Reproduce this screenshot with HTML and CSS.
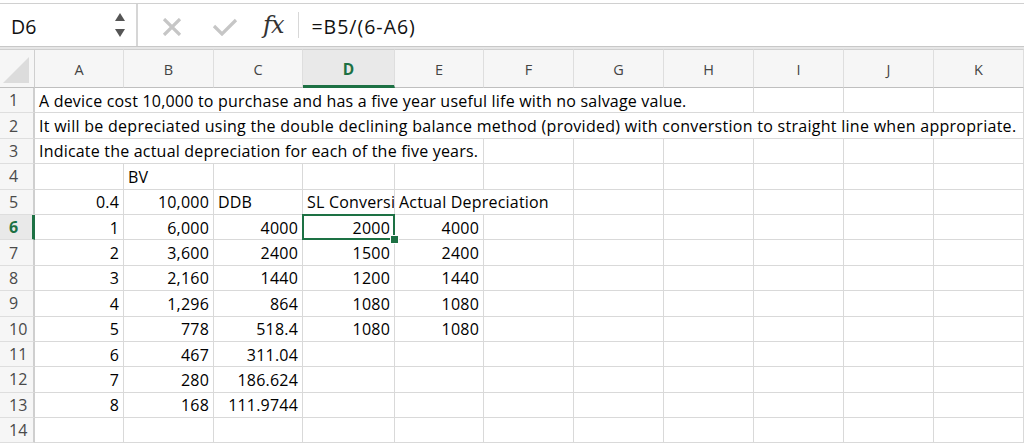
FILE: index.html
```html
<!DOCTYPE html>
<html>
<head>
<meta charset="utf-8">
<link rel="stylesheet" href="styles.css">
</head>
<body>
<div class="app">
  <div class="fbar">
    <div class="namebox">
      <span class="ref">D6</span>
      <span class="spin">
        <svg width="12" height="28" viewBox="0 0 12 28"><path d="M6 2 L11 10 L1 10 Z" fill="#555"/><path d="M1 18 L11 18 L6 26 Z" fill="#555"/></svg>
      </span>
    </div>
    <div class="fbtns">
      <svg class="ic" width="20" height="18" viewBox="0 0 20 18"><path d="M2 1 L18 17 M18 1 L2 17" stroke="#c6c6c6" stroke-width="3.2" fill="none"/></svg>
      <svg class="ic" width="26" height="18" viewBox="0 0 26 18"><path d="M2 8 L10 16 L24 2" stroke="#c6c6c6" stroke-width="3.2" fill="none"/></svg>
      <span class="fx">fx</span>
    </div>
    <div class="formula">=B5/(6-A6)</div>
  </div>
  <div class="sheet">
    <div class="corner"><svg width="28" height="28" viewBox="0 0 28 28"><path d="M27 1 L27 27 L1 27 Z" fill="#dcdcdc"/></svg></div>
    <div class="ch">A</div><div class="ch">B</div><div class="ch">C</div><div class="ch sel">D</div><div class="ch">E</div><div class="ch">F</div><div class="ch">G</div><div class="ch">H</div><div class="ch">I</div><div class="ch">J</div><div class="ch">K</div>

    <div class="rh">1</div>
    <div class="c s8">A device cost 10,000 to purchase and has a five year useful life with no salvage value.</div><div class="c"></div><div class="c"></div><div class="c"></div>

    <div class="rh">2</div>
    <div class="c s11">It will be depreciated using the double declining balance method (provided) with converstion to straight line when appropriate.</div>

    <div class="rh">3</div>
    <div class="c s5">Indicate the actual depreciation for each of the five years.</div><div class="c"></div><div class="c"></div><div class="c"></div><div class="c"></div><div class="c"></div><div class="c"></div>

    <div class="rh">4</div>
    <div class="c"></div><div class="c">BV</div><div class="c"></div><div class="c"></div><div class="c"></div><div class="c"></div><div class="c"></div><div class="c"></div><div class="c"></div><div class="c"></div><div class="c"></div>

    <div class="rh">5</div>
    <div class="c n">0.4</div><div class="c n">10,000</div><div class="c">DDB</div><div class="c">SL Conversi</div><div class="c s2">Actual Depreciation</div><div class="c"></div><div class="c"></div><div class="c"></div><div class="c"></div><div class="c"></div>

    <div class="rh rsel">6</div>
    <div class="c n">1</div><div class="c n">6,000</div><div class="c n">4000</div><div class="c n active">2000<span class="handle"></span></div><div class="c n">4000</div><div class="c"></div><div class="c"></div><div class="c"></div><div class="c"></div><div class="c"></div><div class="c"></div>

    <div class="rh">7</div>
    <div class="c n">2</div><div class="c n">3,600</div><div class="c n">2400</div><div class="c n">1500</div><div class="c n">2400</div><div class="c"></div><div class="c"></div><div class="c"></div><div class="c"></div><div class="c"></div><div class="c"></div>

    <div class="rh">8</div>
    <div class="c n">3</div><div class="c n">2,160</div><div class="c n">1440</div><div class="c n">1200</div><div class="c n">1440</div><div class="c"></div><div class="c"></div><div class="c"></div><div class="c"></div><div class="c"></div><div class="c"></div>

    <div class="rh">9</div>
    <div class="c n">4</div><div class="c n">1,296</div><div class="c n">864</div><div class="c n">1080</div><div class="c n">1080</div><div class="c"></div><div class="c"></div><div class="c"></div><div class="c"></div><div class="c"></div><div class="c"></div>

    <div class="rh">10</div>
    <div class="c n">5</div><div class="c n">778</div><div class="c n">518.4</div><div class="c n">1080</div><div class="c n">1080</div><div class="c"></div><div class="c"></div><div class="c"></div><div class="c"></div><div class="c"></div><div class="c"></div>

    <div class="rh">11</div>
    <div class="c n">6</div><div class="c n">467</div><div class="c n">311.04</div><div class="c"></div><div class="c"></div><div class="c"></div><div class="c"></div><div class="c"></div><div class="c"></div><div class="c"></div><div class="c"></div>

    <div class="rh">12</div>
    <div class="c n">7</div><div class="c n">280</div><div class="c n">186.624</div><div class="c"></div><div class="c"></div><div class="c"></div><div class="c"></div><div class="c"></div><div class="c"></div><div class="c"></div><div class="c"></div>

    <div class="rh">13</div>
    <div class="c n">8</div><div class="c n">168</div><div class="c n">111.9744</div><div class="c"></div><div class="c"></div><div class="c"></div><div class="c"></div><div class="c"></div><div class="c"></div><div class="c"></div><div class="c"></div>

    <div class="rh">14</div>
    <div class="c"></div><div class="c"></div><div class="c"></div><div class="c"></div><div class="c"></div><div class="c"></div><div class="c"></div><div class="c"></div><div class="c"></div><div class="c"></div><div class="c"></div>
  </div>
</div>
</body>
</html>
```
FILE: styles.css
```css
html, body {
  margin: 0;
  padding: 0;
  background: #ffffff;
}
body {
  font-family: "Open Sans", Lato, sans-serif;
  color: #000;
  width: 1024px;
  height: 446px;
  overflow: hidden;
}
.app {
  display: flex;
  flex-direction: column;
}
.fbar {
  margin-top: 3px;
  height: 44px;
  border-top: 1px solid #d0d0d0;
  border-bottom: 1px solid #c8c8c8;
  display: flex;
  align-items: center;
  box-sizing: border-box;
}
.namebox {
  width: 138px;
  height: 100%;
  display: flex;
  align-items: center;
  justify-content: space-between;
  padding: 0 10px 0 11px;
  box-sizing: border-box;
  border-right: 2px solid #d6d6d6;
  margin-right: 2px;
}
.ref {
  font-size: 19.5px;
  color: #111;
  padding-top: 3px;
}
.spin {
  display: flex;
  align-items: center;
}
.fbtns {
  display: flex;
  align-items: center;
  height: 100%;
  padding-left: 22px;
  padding-top: 4px;
  box-sizing: border-box;
}
.fbtns .ic + .ic {
  margin-left: 30px;
}
.fx {
  font-family: "DejaVu Serif", "Liberation Serif", serif;
  font-style: italic;
  font-size: 24px;
  color: #333;
  margin-left: 25px;
  padding-right: 15px;
  border-right: 1px solid #d8d8d8;
  line-height: 26px;
  letter-spacing: -1px;
  margin-top: -4px;
}
.formula {
  font-size: 19.5px;
  letter-spacing: 1px;
  color: #111;
  padding-left: 12px;
  padding-top: 3px;
}
.sheet {
  border-top: 2px solid #e6e6e6;
  display: grid;
  grid-template-columns: 35px 89px 90px 89px 92px 89px 90px 90px 90px 90px 90px 90px;
  grid-template-rows: 39px repeat(14, 25.4px);
  font-size: 16px;
  letter-spacing: 0.2px;
}
.corner {
  background: #f6f6f6;
  border-top: 1px solid #cfcfcf;
  border-right: 1px solid #cfcfcf;
  border-bottom: 1px solid #bfbfbf;
  display: flex;
  align-items: flex-end;
  justify-content: flex-end;
  padding: 0 4px 3px 0;
}
.ch {
  background: #f6f6f6;
  border-top: 1px solid #cfcfcf;
  border-right: 1px solid #dedede;
  border-bottom: 1px solid #bfbfbf;
  display: flex;
  align-items: center;
  justify-content: center;
  font-size: 14.5px;
  letter-spacing: 0;
  color: #444;
  padding-top: 2px;
}
.ch.sel {
  background: #e9e9e9;
  color: #1d7144;
  font-weight: bold;
  font-size: 15.5px;
  border-bottom: 3px solid #1d7144;
}
.rh {
  background: #f6f6f6;
  border-right: 2px solid #cfcfcf;
  border-bottom: 1px solid #dedede;
  display: flex;
  align-items: center;
  padding-left: 9px;
  font-size: 16px;
  letter-spacing: 0;
  color: #4a4a4a;
}
.rh.rsel {
  background: #e9e9e9;
  color: #1d7144;
  font-weight: bold;
  border-right: 3px solid #1d7144;
}
.c {
  border-right: 1px solid #d9d9d9;
  border-bottom: 1px solid #d9d9d9;
  display: flex;
  align-items: center;
  padding: 1px 4px 0 4px;
  white-space: nowrap;
  overflow: hidden;
  min-width: 0;
  position: relative;
}
.c.n {
  justify-content: flex-end;
}
.s2 { grid-column: span 2; overflow: visible; }
.s5 { grid-column: span 5; overflow: visible; }
.s8 { grid-column: span 8; overflow: visible; }
.s11 { grid-column: span 11; overflow: visible; letter-spacing: 0.28px; }
.active {
  overflow: visible;
}
.active::after {
  content: "";
  position: absolute;
  left: -1px;
  top: -1px;
  right: -1px;
  bottom: -1px;
  border: 2px solid #1d7144;
  pointer-events: none;
}
.handle {
  position: absolute;
  right: -5px;
  bottom: -5px;
  width: 7px;
  height: 7px;
  background: #1d7144;
  border: 1px solid #fff;
  z-index: 2;
}
```
